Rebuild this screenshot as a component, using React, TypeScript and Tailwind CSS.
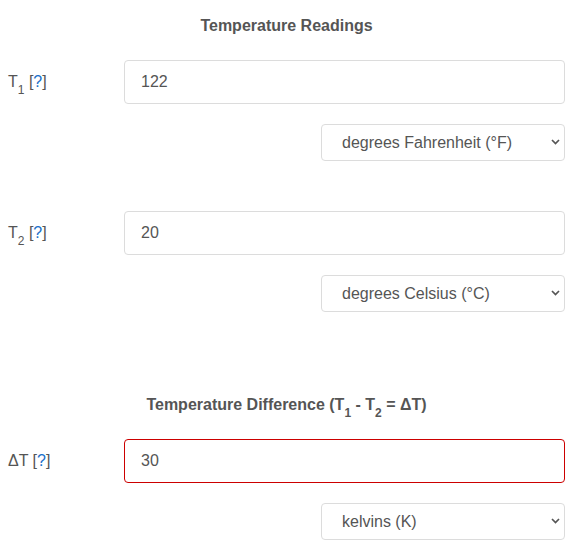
import React from 'react';

const font = { fontFamily: '"Liberation Sans", Arial, sans-serif' };

const Label: React.FC<{ sym: React.ReactNode }> = ({ sym }) => (
  <div className="w-[116px] shrink-0 text-[16px] text-[#555]">
    {sym} [<span className="text-[#1a6fc9]">?</span>]
  </div>
);

const Sub: React.FC<{ n: string }> = ({ n }) => (
  <sub className="text-[12px] align-[-4px]">{n}</sub>
);

const InputRow: React.FC<{ sym: React.ReactNode; value: string; error?: boolean }> = ({ sym, value, error }) => (
  <div className="flex items-center">
    <Label sym={sym} />
    <input
      readOnly
      value={value}
      className={`h-[44px] flex-1 rounded-[4px] border bg-white px-4 text-[16px] text-[#555] outline-none ${
        error ? 'border-[#cc0000]' : 'border-[#dcdcdc]'
      }`}
      style={font}
    />
  </div>
);

const UnitSelect: React.FC<{ value: string; options: string[] }> = ({ value, options }) => (
  <div className="flex justify-end">
    <div className="relative w-[244px]">
      <select
        value={value}
        onChange={() => {}}
        className="h-[37px] w-full appearance-none rounded-[4px] border border-[#dcdcdc] bg-white pl-5 pr-8 text-[16px] text-[#555] outline-none"
        style={font}
      >
        {options.map((o) => (
          <option key={o}>{o}</option>
        ))}
      </select>
      <svg
        className="pointer-events-none absolute right-[5px] top-[15px]"
        width="9"
        height="6"
        viewBox="0 0 9 6"
      >
        <path d="M1 1 L4.5 4.5 L8 1" fill="none" stroke="#555" strokeWidth="1.7" />
      </svg>
    </div>
  </div>
);

const units = ['degrees Celsius (°C)', 'degrees Fahrenheit (°F)', 'kelvins (K)', 'degrees Rankine (°R)'];

export default function App() {
  return (
    <div className="min-h-[552px] bg-white pl-2 pr-[10px]" style={font}>
      <h2 className="pt-[17px] text-center text-[16px] font-bold leading-[18px] text-[#555]">
        Temperature Readings
      </h2>

      <div className="mt-[25px]">
        <InputRow sym={<>T<Sub n="1" /></>} value="122" />
      </div>
      <div className="mt-[20px]">
        <UnitSelect value="degrees Fahrenheit (°F)" options={units} />
      </div>

      <div className="mt-[50px]">
        <InputRow sym={<>T<Sub n="2" /></>} value="20" />
      </div>
      <div className="mt-[20px]">
        <UnitSelect value="degrees Celsius (°C)" options={units} />
      </div>

      <h2 className="mt-[84px] text-center text-[16px] font-bold leading-[18px] text-[#555]">
        Temperature Difference (T<Sub n="1" /> - T<Sub n="2" /> = ΔT)
      </h2>

      <div className="mt-[25px]">
        <InputRow sym={<>ΔT</>} value="30" error />
      </div>
      <div className="mt-[20px]">
        <UnitSelect value="kelvins (K)" options={units} />
      </div>
    </div>
  );
}
